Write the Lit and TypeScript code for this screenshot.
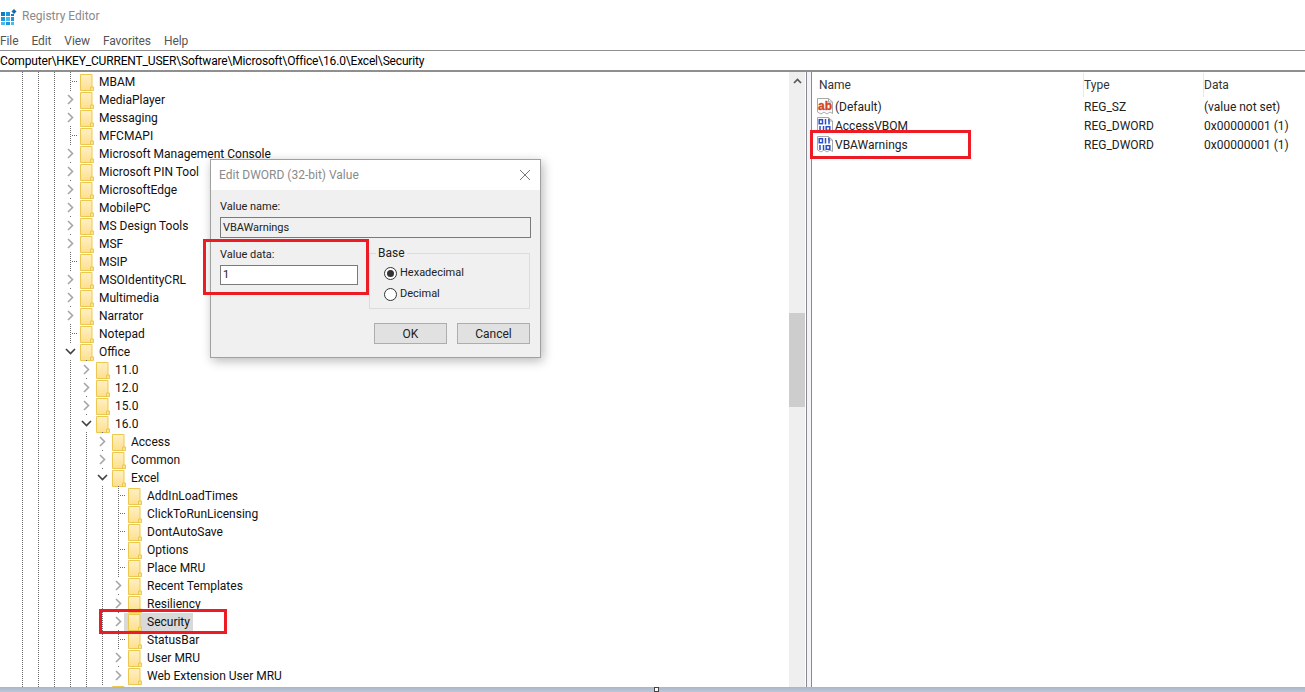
import { LitElement, html, css, svg } from "lit";
import { customElement } from "lit/decorators.js";

type K = "leaf" | "closed" | "open";
type Row = [number, K, string];

const ROWS: Row[] = [
  [0, "leaf", "MBAM"],
  [0, "closed", "MediaPlayer"],
  [0, "closed", "Messaging"],
  [0, "leaf", "MFCMAPI"],
  [0, "closed", "Microsoft Management Console"],
  [0, "closed", "Microsoft PIN Tool"],
  [0, "closed", "MicrosoftEdge"],
  [0, "closed", "MobilePC"],
  [0, "closed", "MS Design Tools"],
  [0, "closed", "MSF"],
  [0, "leaf", "MSIP"],
  [0, "closed", "MSOIdentityCRL"],
  [0, "closed", "Multimedia"],
  [0, "closed", "Narrator"],
  [0, "leaf", "Notepad"],
  [0, "open", "Office"],
  [1, "closed", "11.0"],
  [1, "closed", "12.0"],
  [1, "closed", "15.0"],
  [1, "open", "16.0"],
  [2, "closed", "Access"],
  [2, "closed", "Common"],
  [2, "open", "Excel"],
  [3, "leaf", "AddInLoadTimes"],
  [3, "leaf", "ClickToRunLicensing"],
  [3, "leaf", "DontAutoSave"],
  [3, "leaf", "Options"],
  [3, "leaf", "Place MRU"],
  [3, "closed", "Recent Templates"],
  [3, "closed", "Resiliency"],
  [3, "closed", "Security"],
  [3, "leaf", "StatusBar"],
  [3, "closed", "User MRU"],
  [3, "closed", "Web Extension User MRU"],
  [2, "closed", ""],
];

const folder = svg`<svg class="folder" width="14" height="17" viewBox="0 0 14 17"><defs><linearGradient id="fg" x1="0" y1="0" x2="0" y2="1"><stop offset="0" stop-color="#fff0c4"/><stop offset="1" stop-color="#fddf8e"/></linearGradient></defs><path d="M.5.5h11.500v12.500h1.500v3.500H.5z" fill="url(#fg)" stroke="#edc84f"/><path d="M10.500 16.500v-3.500h2" fill="none" stroke="#edc84f"/></svg>`;

const chevClosed = svg`<svg class="chev" width="9" height="11" viewBox="0 0 9 11"><path d="M2 1l4.500 4.500L2 10" fill="none" stroke="#a6a6a6" stroke-width="1.600"/></svg>`;
const chevOpen = svg`<svg class="chev" width="11" height="9" viewBox="0 0 11 9"><path d="M1 2l4.500 4.500L10 2" fill="none" stroke="#404040" stroke-width="1.600"/></svg>`;

const sheet = svg`<path d="M.5 1.500h11l4 3.500v11.500l-2.500-1.500-3 2-3-2-3 2-3.500-2z" fill="#fff" stroke="#a8a8a8"/><path d="M11.500 1.500v3.500h4" fill="none" stroke="#a8a8a8"/>`;
const abIcon = svg`<svg width="17" height="19" viewBox="0 0 17 19">${sheet}<text x="1" y="12.500" font-family="'Liberation Sans',sans-serif" font-weight="700" font-size="12" fill="#d4451f" stroke="#d4451f" stroke-width=".35">ab</text></svg>`;
const binIcon = svg`<svg width="17" height="19" viewBox="0 0 17 19">${sheet}<g fill="none" stroke="#2a4fc8" stroke-width="1.500"><rect x="2.200" y="3.700" width="3.300" height="4"/><path d="M8.500 3v5.500M12 3v5.500"/><path d="M3 10v5M6.500 10v5"/><rect x="9.200" y="10.700" width="3.600" height="3.600"/></g></svg>`;

@customElement("app-root")
export class AppRoot extends LitElement {
  static styles = css`
    :host { display: block; width: 1305px; height: 692px; overflow: hidden; position: relative; background: #fff; color: #000; font: 12px/18px Roboto, "Noto Sans", sans-serif; }
    .titlebar { height: 30px; display: flex; align-items: center; gap: 5px; padding: 1px 0 0 1px; box-sizing: border-box; color: #8a8a8a; }
    .menu { height: 20px; display: flex; gap: 13px; align-items: center; color: #555; padding-top: 1px; box-sizing: border-box; letter-spacing: -0.1px; }
    .addr { height: 19px; border-top: 1px solid #8f8f8f; border-bottom: 2px solid #8f8f8f; display: flex; align-items: center; white-space: pre; letter-spacing: -0.17px; }
    .main { display: flex; height: 615px; }
    .tree { width: 789px; overflow: hidden; padding: 0 0 0 14px; box-sizing: border-box; }
    .row { display: flex; height: 18px; align-items: stretch; }
    .cell { width: 16px; flex: none; position: relative; background-image: linear-gradient(#6a6a6a 50%, transparent 50%); background-size: 1px 2px; background-repeat: repeat-y; background-position: 8px 0; }
    .cell.twist { display: flex; align-items: center; justify-content: center; }
    .cell.leafc::after { content: ""; position: absolute; left: 10px; top: 9px; width: 6px; height: 1px; background-image: linear-gradient(90deg, #6a6a6a 50%, transparent 50%); background-size: 2px 1px; }
    .chev { background: #fff; padding: 3px 0; }
    .folder { margin: 1px 0 0 2px; flex: none; }
    .label { margin-left: 3px; padding: 0 3px 0 2px; white-space: nowrap; color: #111; line-height: 19px; }
    .folderwrap { display: flex; margin-top: 1px; }
    .folderwrap.sel { background: #d9d9d9; margin-left: -2px; padding-left: 2px; height: 18px; }
    .sb { width: 16px; background: #efefef; display: flex; flex-direction: column; flex: none; }
    .sb .up { height: 18px; display: flex; align-items: center; justify-content: center; }
    .sb .thumb { margin-top: 223px; height: 94px; background: #cdcdcd; }
    .split { margin-left: 1px; border-left: 1px solid #8a8a94; border-right: 1px solid #8a8a94; width: 4px; background: #f4f4f6; flex: none; }
    .list { flex: 1; min-width: 0; }
    .head { display: grid; grid-template-columns: 265px 120px 1fr; height: 25px; align-items: center; color: #333; padding-left: 7px; }
    .head span { height: 24px; display: flex; align-items: center; border-right: 1px solid #e8e8e8; }
    .head span:last-child { border: 0; }
    .lrow { display: grid; grid-template-columns: 265px 120px 1fr; height: 19px; align-items: center; padding-left: 7px; color: #222; }
    .lname { display: flex; align-items: center; gap: 1px; margin-left: -2px; }
    .status { height: 5px; background: linear-gradient(#a9b5c9, #bcc8d8); }
    .grip { position: absolute; left: 654px; top: 687px; width: 3px; height: 3px; border: 1px solid #444; background: #fff; }
    .redbox { position: absolute; border: 3px solid #ed1c24; box-sizing: border-box; pointer-events: none; }
    .r-sec { left: 99px; top: 609px; width: 128px; height: 25px; }
    .r-vba { left: 810px; top: 130px; width: 161px; height: 29px; }
    .r-val { left: 203px; top: 239px; width: 166px; height: 56px; }
    .dlg { position: absolute; left: 210px; top: 159px; width: 331px; height: 199px; box-sizing: border-box; border: 1px solid #a0a0a0; background: #f0f0f0; box-shadow: 2px 3px 10px rgba(0,0,0,.28); color: #222; }
    .dtitle { height: 30px; background: #fff; display: flex; align-items: center; justify-content: space-between; padding: 0 9px 0 8px; color: #8a8a8a; }
    .dbody { padding: 8px 9px 0; display: flex; flex-direction: column; font-size: 11px; }
    .field { height: 20px; border: 1px solid #7a7a7a; box-sizing: border-box; padding-left: 2px; display: flex; align-items: center; }
    .vname { background: #f0f0f0; width: 311px; margin-top: 1px; height: 21px; letter-spacing: -0.05px; }
    .cols { display: flex; margin-top: 8px; gap: 11px; }
    .vdata { width: 138px; background: #fff; }
    .vcol { display: flex; flex-direction: column; gap: 1px; }
    .base { width: 161px; height: 56px; box-sizing: border-box; margin-top: 7px; border: 1px solid #dcdcdc; position: relative; padding: 10px 0 0 14px; display: flex; flex-direction: column; gap: 3px; }
    .base .lg { position: absolute; left: 6px; top: -10px; background: #f0f0f0; padding: 0 2px; font-size: 12px; }
    .radio { display: flex; align-items: center; gap: 3px; }
    .rb { width: 13px; height: 13px; border: 1px solid #333; border-radius: 50%; background: #fff; box-sizing: border-box; display: flex; align-items: center; justify-content: center; }
    .rb i { width: 7px; height: 7px; border-radius: 50%; background: #333; }
    .btns { display: flex; justify-content: flex-end; gap: 10px; margin-top: 14px; margin-right: 1px; }
    .btn { width: 73px; height: 21px; box-sizing: border-box; border: 1px solid #adadad; background: #e1e1e1; display: flex; align-items: center; justify-content: center; color: #222; font-size: 12px; }
  `;

  private renderRow(r: Row) {
    const [lvl, kind, name] = r;
    const guides = Array.from({ length: lvl + 3 }, () => html`<span class="cell"></span>`);
    const twist = kind === "leaf"
      ? html`<span class="cell leafc"></span>`
      : html`<span class="cell twist">${kind === "open" ? chevOpen : chevClosed}</span>`;
    const sel = name === "Security";
    return html`<div class="row">${guides}${twist}
      <span class="folderwrap ${sel ? "sel" : ""}">${folder}${name ? html`<span class="label">${name}</span>` : ""}</span></div>`;
  }

  render() {
    return html`
      <div class="titlebar">
        <svg width="16" height="18" viewBox="0 0 16 18"><g fill="#1e96dc"><rect x="0" y="5" width="4" height="4" fill="#0f7cc4"/><rect x="5" y="5" width="4" height="4"/><rect x="10" y="7" width="3" height="2" fill="#0f7cc4"/><rect x="0" y="10" width="4" height="4"/><rect x="5" y="10" width="4" height="4" fill="#4cb8ec"/><rect x="10" y="10" width="3" height="4"/><rect x="0" y="15" width="4" height="3" fill="#4cb8ec"/><rect x="5" y="15" width="4" height="3"/><rect x="10" y="15" width="3" height="3" fill="#4cb8ec"/></g><path d="M13 2l2.500 2.500-2.500 2.500-2.500-2.500z" fill="#1668a8"/></svg>
        <span>Registry Editor</span>
      </div>
      <div class="menu"><span>File</span><span>Edit</span><span>View</span><span>Favorites</span><span>Help</span></div>
      <div class="addr">Computer\\HKEY_CURRENT_USER\\Software\\Microsoft\\Office\\16.0\\Excel\\Security</div>
      <div class="main">
        <div class="tree">${ROWS.map((r) => this.renderRow(r))}</div>
        <div class="sb"><div class="up"><svg width="9" height="6" viewBox="0 0 9 6"><path d="M1 5l3.500-3.500L8 5" fill="none" stroke="#555" stroke-width="1.600"/></svg></div><div class="thumb"></div></div>
        <div class="split"></div>
        <div class="list">
          <div class="head"><span>Name</span><span>Type</span><span>Data</span></div>
          <div class="lrow"><span class="lname">${abIcon}(Default)</span><span>REG_SZ</span><span>(value not set)</span></div>
          <div class="lrow"><span class="lname">${binIcon}AccessVBOM</span><span>REG_DWORD</span><span>0x00000001 (1)</span></div>
          <div class="lrow"><span class="lname">${binIcon}VBAWarnings</span><span>REG_DWORD</span><span>0x00000001 (1)</span></div>
        </div>
      </div>
      <div class="status"></div>
      <div class="grip"></div>
      <div class="redbox r-sec"></div>
      <div class="redbox r-vba"></div>
      <div class="dlg">
        <div class="dtitle"><span>Edit DWORD (32-bit) Value</span><svg width="12" height="12" viewBox="0 0 12 12"><path d="M1 1l10 10M11 1L1 11" stroke="#777" fill="none"/></svg></div>
        <div class="dbody">
          <span>Value name:</span>
          <div class="field vname">VBAWarnings</div>
          <div class="cols">
            <div class="vcol"><span>Value data:</span><div class="field vdata">1</div></div>
            <div class="base"><span class="lg">Base</span>
              <label class="radio"><span class="rb"><i></i></span>Hexadecimal</label>
              <label class="radio"><span class="rb"></span>Decimal</label>
            </div>
          </div>
          <div class="btns"><div class="btn">OK</div><div class="btn">Cancel</div></div>
        </div>
      </div>
      <div class="redbox r-val"></div>
    `;
  }
}
